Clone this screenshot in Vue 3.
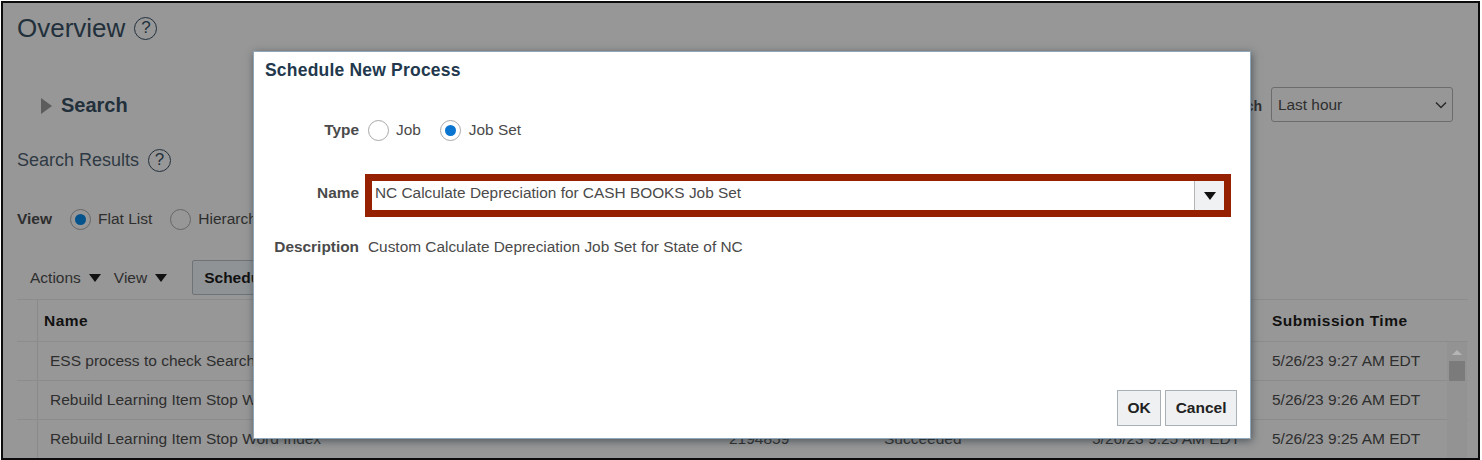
<script setup>
// only the last row's middle columns show under the dialog
const rows = [
  { key: 1, name: 'ESS process to check Search Index', id: '', status: '', sched: '', time: '5/26/23 9:27 AM EDT' },
  { key: 2, name: 'Rebuild Learning Item Stop Word Index', id: '', status: '', sched: '', time: '5/26/23 9:26 AM EDT' },
  { key: 3, name: 'Rebuild Learning Item Stop Word Index', id: '2194859', status: 'Succeeded', sched: '5/26/23 9:25 AM EDT', time: '5/26/23 9:25 AM EDT' }
]
</script>

<template>
  <div class="frame">
    <div class="page">
      <div class="title-row">
        <h1>Overview</h1>
        <span class="help big">?</span>
      </div>

      <div class="search-row">
        <div class="search-left">
          <span class="tri-right"></span>
          <h2>Search</h2>
        </div>
        <div class="search-right">
          <label>Submission Time Search</label>
          <div class="select">
            <span>Last hour</span>
            <svg width="12" height="8" viewBox="0 0 12 8"><path d="M1 1.5 6 6.5 11 1.5" fill="none" stroke="#2b2b2b" stroke-width="1.5" /></svg>
          </div>
        </div>
      </div>

      <div class="results-row">
        <span class="results-title">Search Results</span>
        <span class="help small">?</span>
      </div>

      <div class="view-row">
        <b>View</b>
        <span class="radio on"></span>
        <span>Flat List</span>
        <span class="radio second"></span>
        <span>Hierarchy</span>
      </div>

      <div class="toolbar">
        <span>Actions</span><span class="tri-down"></span>
        <span class="gap">View</span><span class="tri-down"></span>
        <button class="sched">Schedule New Process</button>
      </div>

      <div class="table">
        <div class="tr head">
          <div class="stub"></div>
          <div class="c-name">Name</div>
          <div></div>
          <div></div>
          <div></div>
          <div class="c-time">Submission Time</div>
        </div>
        <div v-for="r in rows" :key="r.key" class="tr">
          <div class="stub"></div>
          <div class="c-name indent">{{ r.name }}</div>
          <div class="c-id">{{ r.id }}</div>
          <div class="c-status">{{ r.status }}</div>
          <div class="c-sched">{{ r.sched }}</div>
          <div class="c-time">{{ r.time }}</div>
        </div>
        <div class="scrollbar">
          <span class="up"></span>
          <span class="thumb"></span>
        </div>
      </div>
    </div>

    <div class="dialog">
      <div class="dialog-title">Schedule New Process</div>

      <div class="form">
        <div class="field type-field">
          <label>Type</label>
          <span class="radio white"></span>
          <span class="opt">Job</span>
          <span class="radio white on opt2"></span>
          <span class="opt">Job Set</span>
        </div>

        <div class="field name-field">
          <label>Name</label>
          <div class="highlight">
            <div class="name-input">NC Calculate Depreciation for CASH BOOKS Job Set</div>
            <div class="name-btn"><span class="tri-down"></span></div>
          </div>
        </div>

        <div class="field desc-field">
          <label>Description</label>
          <span>Custom Calculate Depreciation Job Set for State of NC</span>
        </div>
      </div>

      <div class="actions">
        <button>OK</button>
        <button>Cancel</button>
      </div>
    </div>
  </div>
</template>

<style>
html, body {
  margin: 0;
  background: #fff;
}
</style>

<style scoped>
.frame {
  position: relative;
  box-sizing: border-box;
  width: 1479px;
  height: 459px;
  margin-left: 1px;
  margin-top: 1px;
  border: 2px solid #0c0c0c;
  background: #979797;
  overflow: hidden;
  font-family: "Liberation Sans", Arial, sans-serif;
  color: #2e2e2e;
}
.page {
  padding: 0 10px 0 14px;
}
.title-row {
  display: flex;
  align-items: center;
  height: 50px;
}
h1 {
  margin: 0;
  font-size: 26px;
  font-weight: 400;
  color: #22303c;
}
.help {
  display: inline-flex;
  align-items: center;
  justify-content: center;
  box-sizing: border-box;
  border: 1.5px solid #22303c;
  border-radius: 50%;
  color: #22303c;
}
.help.big {
  width: 23px;
  height: 23px;
  margin-left: 9px;
  font-size: 17px;
}
.help.small {
  width: 23px;
  height: 23px;
  margin-left: 9px;
  font-size: 17px;
}
.search-row {
  display: flex;
  justify-content: space-between;
  align-items: center;
  height: 35px;
  margin-top: 35px;
  padding-right: 15px;
}
.search-left {
  display: flex;
  align-items: center;
  padding-left: 24px;
}
.tri-right {
  width: 0;
  height: 0;
  border-left: 11px solid #5c5c5c;
  border-top: 8px solid transparent;
  border-bottom: 8px solid transparent;
  margin-right: 9px;
}
h2 {
  margin: 0;
  font-size: 20px;
  font-weight: 700;
  color: #22303c;
}
.search-right {
  display: flex;
  align-items: center;
  font-size: 14px;
  font-weight: 700;
}
.search-right label {
  margin-right: 9px;
}
.select {
  display: flex;
  align-items: center;
  justify-content: space-between;
  box-sizing: border-box;
  width: 182px;
  height: 35px;
  margin-bottom: 2px;
  padding: 0 5px 0 6px;
  border: 1px solid #6c6c6c;
  border-radius: 3px;
  font-size: 15.4px;
  font-weight: 400;
}
.results-row {
  display: flex;
  align-items: center;
  height: 26px;
  margin-top: 24px;
}
.results-title {
  font-size: 18px;
  color: #2f3a44;
}
.view-row {
  display: flex;
  align-items: center;
  height: 24px;
  margin-top: 34px;
  font-size: 15.5px;
}
.view-row b {
  margin-right: 18px;
}
.radio {
  display: inline-block;
  position: relative;
  box-sizing: border-box;
  width: 21px;
  height: 21px;
  margin-right: 7px;
  border: 1px solid #666;
  border-radius: 50%;
  flex: none;
}
.radio.on::after {
  content: "";
  position: absolute;
  left: 4px;
  top: 4px;
  width: 11px;
  height: 11px;
  border-radius: 50%;
  background: #04538c;
}
.radio.second {
  margin-left: 18px;
}
.toolbar {
  display: flex;
  align-items: center;
  height: 35px;
  margin-top: 29px;
  padding-left: 13px;
  font-size: 15.5px;
}
.tri-down {
  display: inline-block;
  width: 0;
  height: 0;
  margin-left: 8px;
  border-top: 8px solid #111;
  border-left: 6px solid transparent;
  border-right: 6px solid transparent;
}
.gap {
  margin-left: 13px;
}
.sched {
  box-sizing: border-box;
  height: 35px;
  margin-left: 25px;
  padding: 0 11px;
  border: 1px solid #6e7378;
  border-radius: 2px;
  background: #8f9396;
  color: #111;
  font: 700 15.5px "Liberation Sans", Arial, sans-serif;
  white-space: nowrap;
}
.table {
  position: relative;
  margin-top: 4px;
  border-top: 1px solid #8c8c8c;
  font-size: 15.5px;
}
.tr {
  display: grid;
  grid-template-columns: 21px 691px 155px 208px 180px 1fr;
  height: 38px;
  align-items: center;
  border-bottom: 1px solid #8c8c8c;
}
.tr.head {
  height: 41px;
  color: #111;
  font-weight: 700;
  letter-spacing: 0.5px;
}
.stub {
  align-self: stretch;
  border-right: 1px solid #8a8a8a;
}
.c-name {
  padding-left: 6px;
}
.indent {
  padding-left: 12px;
}
.scrollbar {
  position: absolute;
  top: 42px;
  right: 1px;
  width: 20px;
  height: 120px;
  background: #939393;
}
.up {
  position: absolute;
  left: 5px;
  top: 8px;
  width: 0;
  height: 0;
  border-bottom: 5px solid #b5b5b5;
  border-left: 5px solid transparent;
  border-right: 5px solid transparent;
}
.thumb {
  position: absolute;
  left: 2px;
  top: 19px;
  width: 16px;
  height: 20px;
  background: #7b7b7b;
}

.dialog {
  position: absolute;
  left: 250px;
  top: 48px;
  box-sizing: border-box;
  width: 998px;
  height: 388px;
  padding: 8px 12px 12px 11px;
  display: flex;
  flex-direction: column;
  background: #fff;
  border: 1px solid #8fa6b8;
  box-shadow: 1px 2px 8px rgba(40, 50, 60, 0.65);
  color: #4a4a4a;
  font-size: 15.4px;
}
.dialog-title {
  font-size: 17.5px;
  font-weight: 700;
  color: #22384d;
  letter-spacing: 0.2px;
}
.form {
  flex: 1;
}
.field {
  display: flex;
  align-items: center;
}
.field label {
  box-sizing: border-box;
  width: 94px;
  margin-right: 9px;
  text-align: right;
  font-weight: 700;
  color: #4a4a4a;
  flex: none;
}
.type-field {
  margin-top: 37px;
  height: 24px;
}
.radio.white {
  border-color: #a8a8a8;
  margin-right: 7px;
  background: #fff;
}
.radio.white.on::after {
  background: #0a74d1;
}
.radio.white.opt2 {
  margin-left: 19px;
  margin-right: 8px;
}
.name-field {
  margin-top: 32px;
}
.name-field label {
  margin-bottom: 5px;
}
.highlight {
  display: flex;
  box-sizing: border-box;
  width: 866px;
  height: 43px;
  margin-left: -3px;
  border: 7px solid #962100;
}
.name-input {
  flex: 1;
  padding-left: 3px;
  line-height: 24px;
  color: #4a4a4a;
}
.name-btn {
  display: flex;
  align-items: center;
  justify-content: center;
  width: 29px;
  border-left: 1px solid #b4b4b4;
  background: #f0f1f2;
}
.name-btn .tri-down {
  margin-left: 0;
}
.desc-field {
  margin-top: 21px;
}
.actions {
  display: flex;
  justify-content: flex-end;
  gap: 4px;
  padding-right: 1px;
}
.actions button {
  box-sizing: border-box;
  height: 36px;
  padding: 0 9.5px;
  border: 1px solid #a8b0b6;
  background: #eef0f1;
  color: #222;
  font: 700 15.5px "Liberation Sans", Arial, sans-serif;
}
</style>
